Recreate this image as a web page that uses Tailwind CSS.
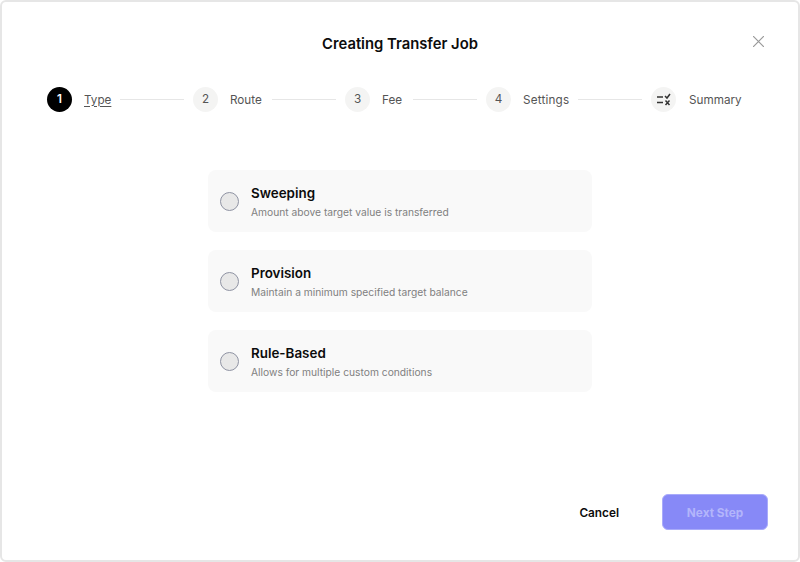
<!DOCTYPE html>
<html lang="en">
<head>
    <meta charset="UTF-8">
    <meta name="viewport" content="width=device-width, initial-scale=1.0">
    <title>Creating Transfer Job</title>
    <script src="https://cdn.jsdelivr.net/npm/@tailwindcss/browser@4"></script>
</head>
<body class="bg-white font-['Inter',sans-serif]">
    <div class="h-[562px] w-[800px] flex flex-col border-2 border-[#e6e6e6] rounded-md overflow-hidden">
        <!-- header -->
        <header class="relative h-[84px] shrink-0 pt-[32px] text-center">
            <h1 class="text-[14.8px] leading-5 font-semibold text-[#0c0c0c]">Creating Transfer Job</h1>
            <button class="absolute right-[34px] top-[34px] text-[#9a9a9a]">
                <svg class="w-[11px] h-[11px] block" viewBox="0 0 11 11" fill="none" stroke="currentColor" stroke-width="1.2"><path d="M0 0l11 11M11 0L0 11"/></svg>
            </button>
        </header>

        <!-- stepper -->
        <nav class="flex items-center h-[26px] pl-[45px] text-[11.7px] text-[#555]">
            <span class="w-[25px] h-[25px] pt-px rounded-full bg-black text-white flex items-center justify-center font-semibold">1</span>
            <span class="ml-3 w-[27px] pt-[3px] underline underline-offset-2">Type</span>
            <span class="ml-[9px] mr-[9px] w-16 h-px bg-[#e6e6e6]"></span>
            <span class="w-[25px] h-[25px] pt-px rounded-full bg-[#f4f4f3] flex items-center justify-center">2</span>
            <span class="ml-3 w-[33px] pt-[3px]">Route</span>
            <span class="ml-[9px] mr-[9px] w-16 h-px bg-[#e6e6e6]"></span>
            <span class="w-[25px] h-[25px] pt-px rounded-full bg-[#f4f4f3] flex items-center justify-center">3</span>
            <span class="ml-3 w-[21px] pt-[3px]">Fee</span>
            <span class="ml-[10px] mr-[9px] w-16 h-px bg-[#e6e6e6]"></span>
            <span class="w-[25px] h-[25px] pt-px rounded-full bg-[#f4f4f3] flex items-center justify-center">4</span>
            <span class="ml-3 w-[46px] pt-[3px] tracking-[0.2px]">Settings</span>
            <span class="ml-[9px] mr-[9px] w-16 h-px bg-[#e6e6e6]"></span>
            <span class="w-[25px] h-[25px] rounded-full bg-[#f4f4f3] flex items-center justify-center">
                <svg class="w-[15px] h-[13px]" viewBox="0 0 15 13" fill="none" stroke="#333" stroke-width="1.5"><path d="M1 4h6M1 9.5h6M9 3l2 2 3-4M9.5 7.5l4 4.5M13.5 7.5l-4 4.5"/></svg>
            </span>
            <span class="ml-[13px] pt-[3px]">Summary</span>
        </nav>

        <!-- job types -->
        <main class="flex-1 mt-[58px] w-[384px] self-center flex flex-col gap-[18px]">
            <label class="h-[62px] shrink-0 rounded-lg bg-[#f9f9f9] flex items-center gap-3 pl-3">
                <span class="w-[19px] h-[19px] rounded-full bg-[#e8e8e8] border border-[#8f93a3]"></span>
                <span class="flex flex-col gap-px">
                    <span class="text-[13.4px] leading-5 font-semibold text-[#0c0c0c]">Sweeping</span>
                    <span class="text-[10.25px] leading-4 text-[#808080]">Amount above target value is transferred</span>
                </span>
            </label>
            <label class="h-[62px] shrink-0 rounded-lg bg-[#f9f9f9] flex items-center gap-3 pl-3">
                <span class="w-[19px] h-[19px] rounded-full bg-[#e8e8e8] border border-[#8f93a3]"></span>
                <span class="flex flex-col gap-px">
                    <span class="text-[13.4px] leading-5 font-semibold text-[#0c0c0c]">Provision</span>
                    <span class="text-[10.25px] leading-4 text-[#808080]">Maintain a minimum specified target balance</span>
                </span>
            </label>
            <label class="h-[62px] shrink-0 rounded-lg bg-[#f9f9f9] flex items-center gap-3 pl-3">
                <span class="w-[19px] h-[19px] rounded-full bg-[#e8e8e8] border border-[#8f93a3]"></span>
                <span class="flex flex-col gap-px">
                    <span class="text-[13.4px] leading-5 font-semibold text-[#0c0c0c]">Rule-Based</span>
                    <span class="text-[10.25px] leading-4 text-[#808080]">Allows for multiple custom conditions</span>
                </span>
            </label>
        </main>

        <!-- footer -->
        <footer class="flex items-center justify-end h-9 mb-[30px] pr-[30px] text-[11.8px] font-semibold">
            <button class="text-[#0c0c0c] mr-[43px] pt-[3px]">Cancel</button>
            <button class="w-[106px] h-9 rounded-md bg-[#8789f7] border border-[#a9abfa] text-[#b3b5fb] font-bold pt-[3px]">Next Step</button>
        </footer>
    </div>
</body>
</html>
